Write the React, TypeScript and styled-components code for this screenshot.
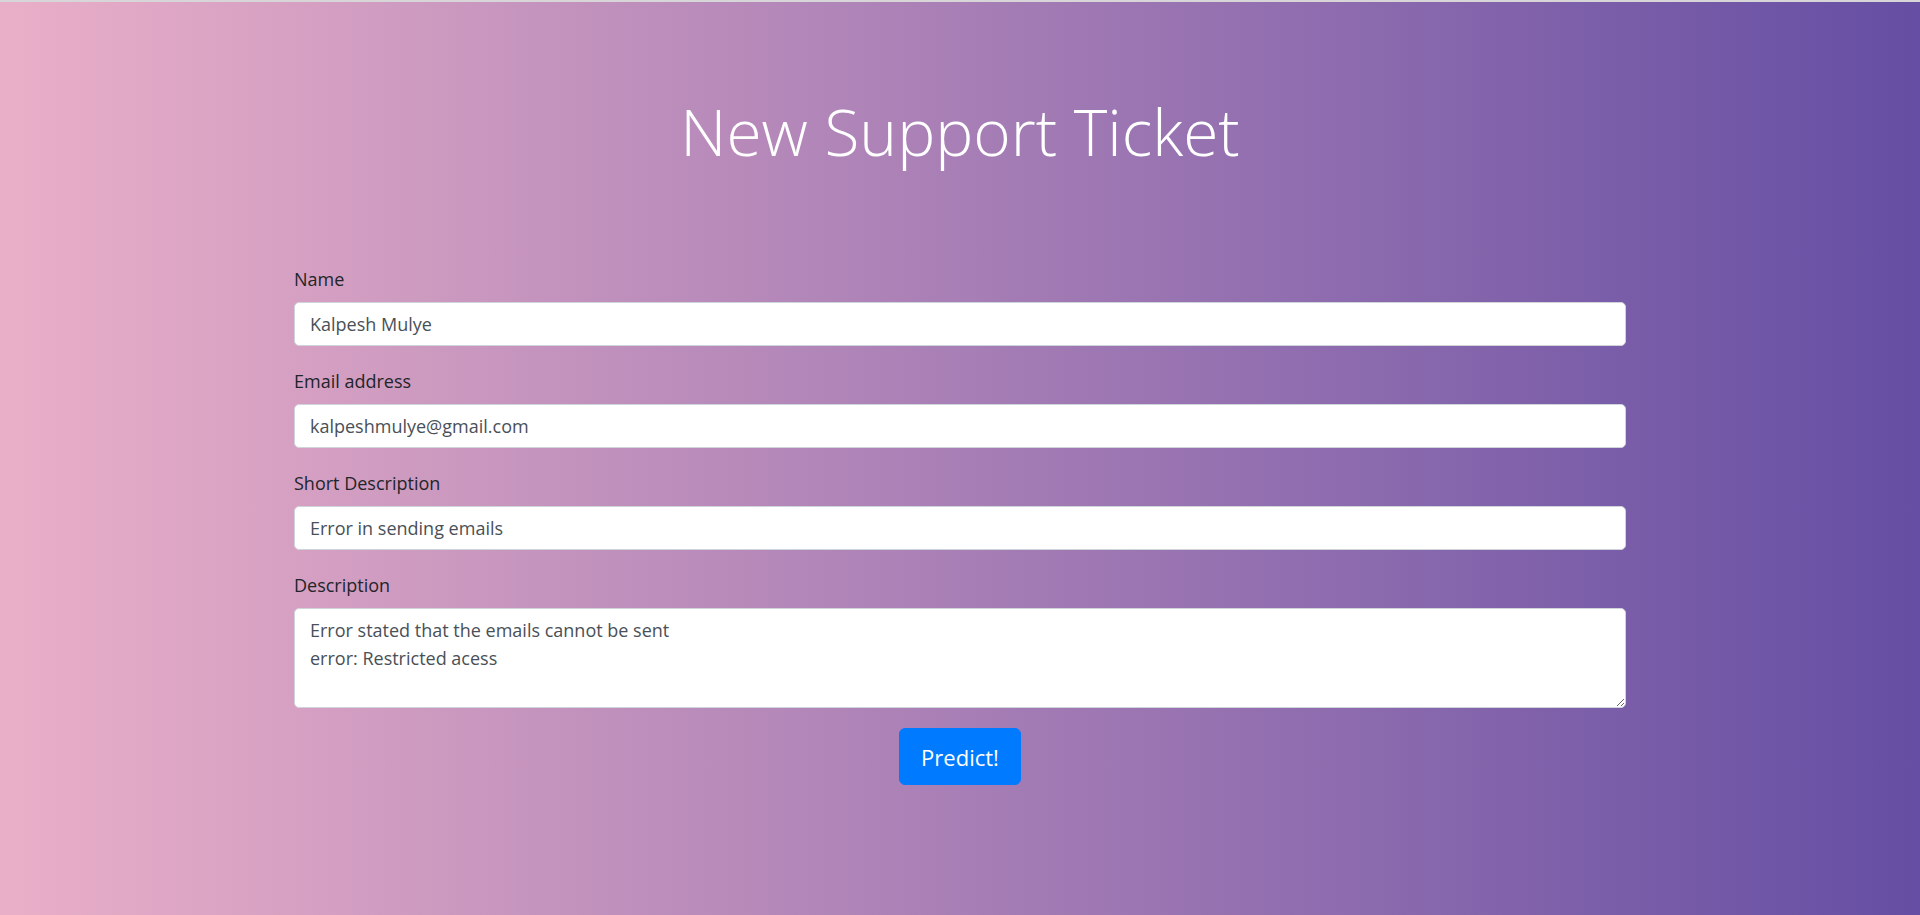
import styled, { createGlobalStyle } from "styled-components"

const GlobalStyle = createGlobalStyle`
    * {
        box-sizing: border-box;
    }
    body {
        margin: 0;
        font-family: "Open Sans", "Noto Sans", Arial, sans-serif;
    }
`

type FieldPropsType = {
    label: string,
    value: string,
    type?: string
}

const Field = (props: FieldPropsType) => {
    return (
        <FormGroup>
            <Label>{props.label}</Label>
            <Input type={props.type || "text"} defaultValue={props.value} />
        </FormGroup>
    )
}

export default function App() {
    return (
        <Page>
            <GlobalStyle />
            <Title>New Support Ticket</Title>
            <Form onSubmit={(e) => e.preventDefault()}>
                <Field label={"Name"} value={"Kalpesh Mulye"} />
                <Field label={"Email address"} value={"kalpeshmulye@gmail.com"} type={"email"} />
                <Field label={"Short Description"} value={"Error in sending emails"} />
                <FormGroup $last>
                    <Label>Description</Label>
                    <TextArea rows={3} defaultValue={"Error stated that the emails cannot be sent\nerror: Restricted acess"} />
                </FormGroup>
                <ButtonRow>
                    <Button type="submit">Predict!</Button>
                </ButtonRow>
            </Form>
        </Page>
    )
}

const Page = styled.div`
    min-height: 100vh;
    border-top: 2px solid #d7d5d8;
    background: linear-gradient(to right, #eaafc8, #654ea3);
    padding: 90px 0 120px;
`

const Title = styled.h1`
    margin: 0 0 94px;
    text-align: center;
    color: #ffffff;
    font-size: 64px;
    font-weight: 300;
    line-height: 79px;
`

const Form = styled.form`
    max-width: 1332px;
    margin: 0 auto;
`

const FormGroup = styled.div<{ $last?: boolean }>`
    display: flex;
    flex-direction: column;
    margin-bottom: ${props => props.$last ? "20px" : "21px"};
`

const Label = styled.label`
    color: #212529;
    font-size: 18px;
    line-height: 28px;
    margin-bottom: 9px;
`

const Input = styled.input`
    height: 44px;
    padding: 7px 15px;
    font-family: inherit;
    font-size: 18px;
    line-height: 28px;
    color: #495057;
    background: #ffffff;
    border: 1px solid #ced4da;
    border-radius: 5px;
    outline: none;
`

const TextArea = styled.textarea`
    height: 100px;
    padding: 7px 15px;
    font-family: inherit;
    font-size: 18px;
    line-height: 28px;
    color: #495057;
    background: #ffffff;
    border: 1px solid #ced4da;
    border-radius: 5px;
    outline: none;
    resize: vertical;
`

const ButtonRow = styled.div`
    display: flex;
    justify-content: center;
`

const Button = styled.button`
    height: 57px;
    padding: 0 21px;
    font-family: inherit;
    font-size: 22px;
    color: #ffffff;
    background: #007bff;
    border: 1px solid #007bff;
    border-radius: 6px;
    cursor: pointer;
`
